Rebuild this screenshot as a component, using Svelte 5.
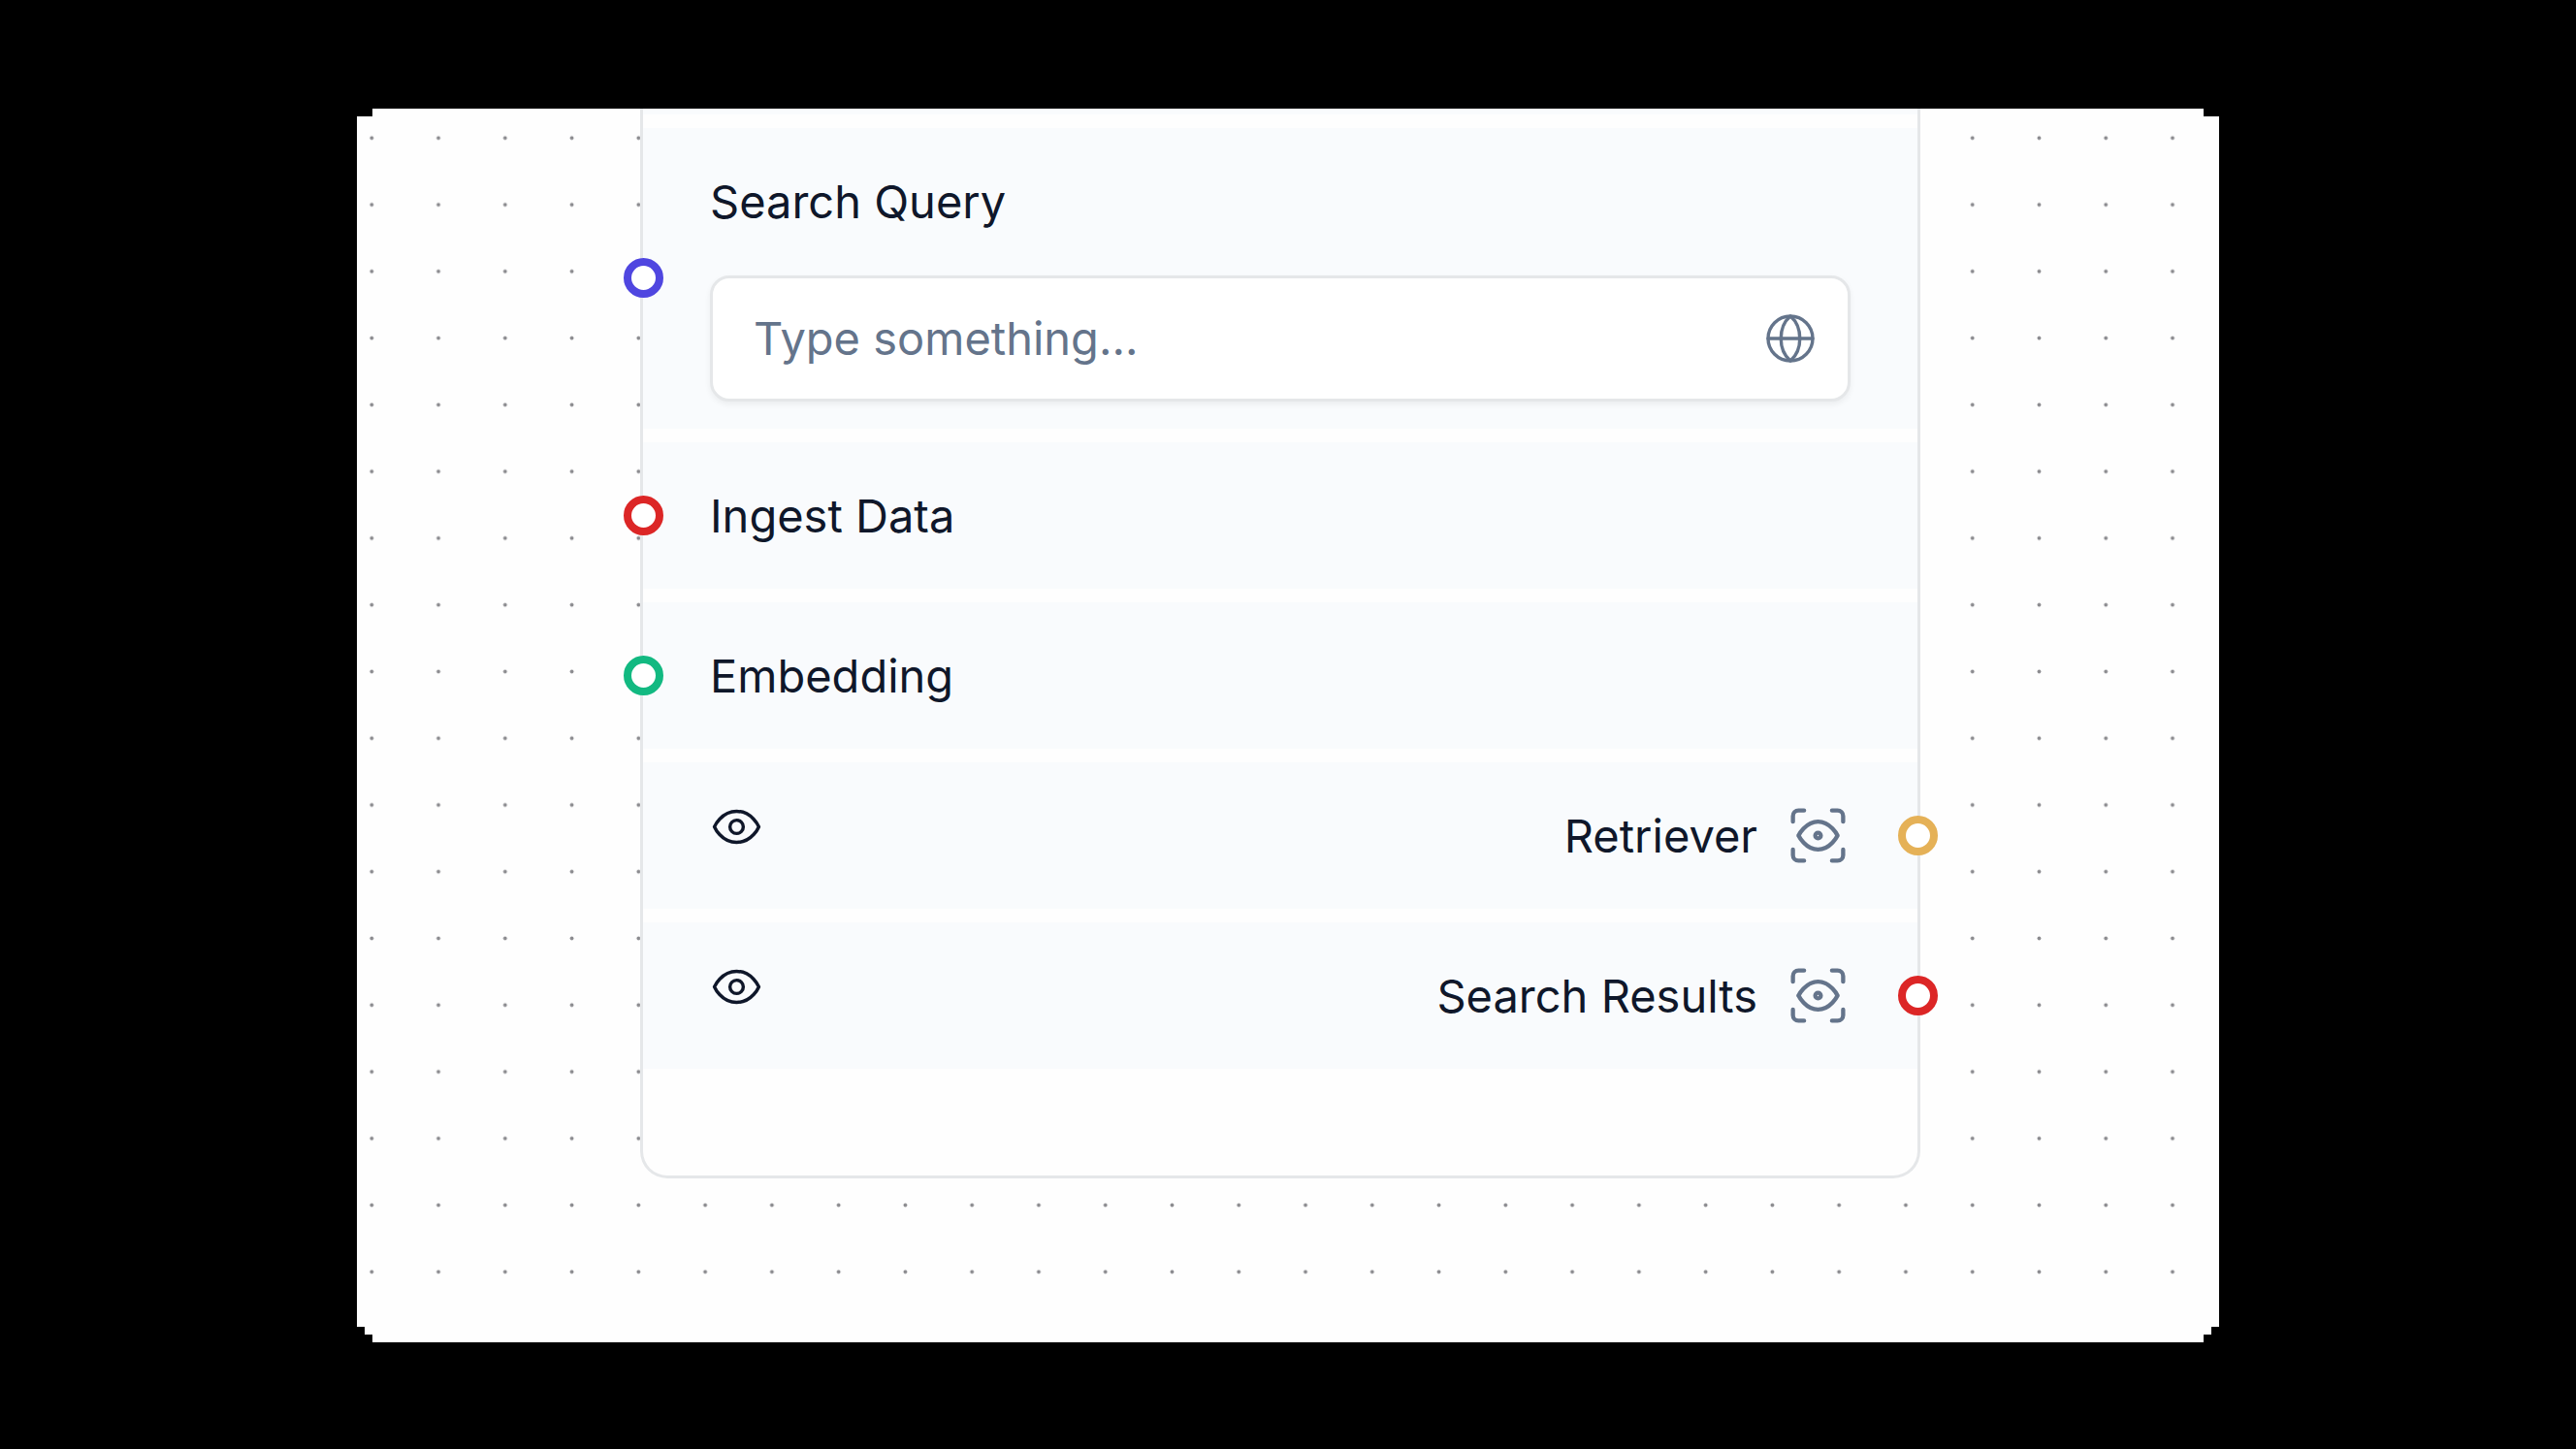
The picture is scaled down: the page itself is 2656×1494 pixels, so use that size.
<script>
  let query = $state('');

  const inputs = [
    { label: 'Ingest Data', color: 'red' },
    { label: 'Embedding', color: 'green' }
  ];

  const outputs = [
    { label: 'Retriever', color: 'gold' },
    { label: 'Search Results', color: 'red' }
  ];
</script>

<main class="page">
  <section class="canvas">
    <svg class="dots" aria-hidden="true">
      <defs>
        <pattern
          id="grid-dots"
          width="16"
          height="16"
          patternUnits="userSpaceOnUse"
          patternTransform="translate(-19.1 -4.1) scale(4.298)"
        >
          <circle cx="8" cy="8" r="0.45" fill="#8b8b8f" />
        </pattern>
      </defs>
      <rect width="100%" height="100%" fill="url(#grid-dots)" />
    </svg>

    <article class="node">
      <div class="row clipped"></div>

      <div class="row field">
        <button class="handle left indigo" aria-label="Connect Search Query"></button>
        <label for="query">Search Query</label>
        <div class="box">
          <input id="query" type="text" placeholder="Type something..." bind:value={query} />
          <button class="icon" aria-label="Use a global variable">
            <svg class="globe" viewBox="0 0 50 50">
              <circle cx="25" cy="25" r="23" />
              <path d="M2 25h46M25 2c-13 11-13 35 0 46M25 2c13 11 13 35 0 46" />
            </svg>
          </button>
        </div>
      </div>

      {#each inputs as input}
        <div class="row">
          <button class="handle left {input.color}" aria-label="Connect {input.label}"></button>
          <span>{input.label}</span>
        </div>
      {/each}

      {#each outputs as output}
        <div class="row output">
          <button class="icon toggle" aria-label="Hide {output.label}">
            <svg class="eye" viewBox="0 0 24 24">
              <path d="M2 12s3-7 10-7 10 7 10 7-3 7-10 7-10-7-10-7Z" />
              <circle cx="12" cy="12" r="3" />
            </svg>
          </button>
          <span>{output.label}</span>
          <button class="icon" aria-label="Inspect {output.label}">
            <svg class="scan" viewBox="0 0 24 24">
              <path d="M3 7V5a2 2 0 0 1 2-2h2M17 3h2a2 2 0 0 1 2 2v2M21 17v2a2 2 0 0 1-2 2h-2M7 21H5a2 2 0 0 1-2-2v-2" />
              <circle cx="12" cy="12" r="1" />
              <path d="M5 12s2.5-5 7-5 7 5 7 5-2.5 5-7 5-7-5-7-5" />
            </svg>
          </button>
          <button class="handle right {output.color}" aria-label="Connect {output.label}"></button>
        </div>
      {/each}
    </article>
  </section>
</main>

<style>
  :global(body) {
    background: #000;
  }

  .page {
    box-sizing: border-box;
    min-height: 100vh;
    padding: 112px 368px 110px;
    font-family: Inter, 'Liberation Sans', sans-serif;
    font-size: 47px;
    line-height: 56px;
    color: #0f172a;
  }

  .canvas {
    position: relative;
    padding: 0 308px 169px 292px;
    background: #fefefe;
    clip-path: polygon(
      16px 0, calc(100% - 16px) 0, calc(100% - 16px) 8px, 100% 8px,
      100% calc(100% - 16px), calc(100% - 8px) calc(100% - 16px),
      calc(100% - 8px) calc(100% - 8px), calc(100% - 16px) calc(100% - 8px),
      calc(100% - 16px) 100%, 16px 100%,
      16px calc(100% - 8px), 8px calc(100% - 8px),
      8px calc(100% - 16px), 0 calc(100% - 16px),
      0 8px, 16px 8px
    );
  }

  .dots {
    position: absolute;
    inset: 0;
    width: 100%;
    height: calc(100% - 16px);
  }

  .node {
    position: relative;
    display: flex;
    flex-direction: column;
    gap: 14px;
    padding-bottom: 110px;
    border: 3px solid #e5e7e9;
    border-top: 0;
    border-radius: 0 0 28px 28px;
    background: #fefefe;
  }

  .row {
    position: relative;
    display: flex;
    align-items: center;
    box-sizing: border-box;
    min-height: 151px;
    padding: 0 68px 0 69px;
    background: #f9fbfd;
  }

  .row.clipped {
    min-height: 6px;
  }

  .row.field {
    flex-direction: column;
    align-items: stretch;
    gap: 48px;
    padding: 48px 69px 28px;
  }

  .box {
    display: flex;
    align-items: center;
    box-sizing: border-box;
    height: 130px;
    padding: 0 34px 0 42px;
    border: 3px solid #e5e7e9;
    border-radius: 20px;
    background: #fff;
    box-shadow: 0 3px 6px rgb(0 0 0 / 6%);
  }

  input {
    flex: 1;
    min-width: 0;
    padding: 0;
    border: 0;
    outline: 0;
    background: none;
    font: inherit;
    color: inherit;
  }

  input::placeholder {
    color: #64748b;
    opacity: 1;
  }

  button {
    padding: 0;
    border: 0;
    background: none;
    cursor: pointer;
  }

  .icon {
    display: flex;
    color: #64748b;
  }

  .icon svg {
    fill: none;
    stroke: currentColor;
    stroke-width: 1.5;
    stroke-linecap: round;
    stroke-linejoin: round;
  }

  .icon .globe {
    width: 50px;
    height: 50px;
    stroke-width: 3.4;
  }

  .eye {
    width: 55px;
    height: 55px;
  }

  .scan {
    width: 69px;
    height: 69px;
  }

  .output {
    gap: 28px;
  }

  .toggle {
    margin-right: auto;
    padding-bottom: 18px;
    color: #0f172a;
  }

  .handle {
    position: absolute;
    top: calc(50% - 21px);
    box-sizing: border-box;
    width: 41px;
    height: 41px;
    border: 8px solid;
    border-radius: 50%;
    background: #fff;
  }

  .left {
    left: -20px;
  }

  .right {
    right: -21px;
  }

  .indigo {
    border-color: #4f46e0;
  }

  .red {
    border-color: #dc2626;
  }

  .green {
    border-color: #12b981;
  }

  .gold {
    border-color: #e5b157;
  }
</style>
